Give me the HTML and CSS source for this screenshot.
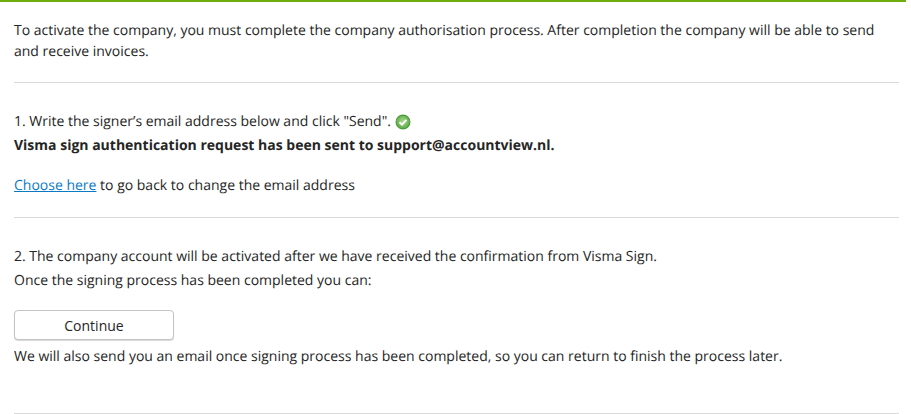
FILE: index.html
```html
<!DOCTYPE html>
<html>

<head>
    <link rel="stylesheet" href="styles.css">
</head>

<body>
    <div class="main">
        <div class="section intro">
            <p class="line">To activate the company, you must complete the company authorisation process. After completion the company will be able to send and receive invoices.</p>
        </div>

        <div class="section step1">
            <p class="line">1. Write the signer’s email address below and click "Send".
                <svg class="ok" width="16" height="16" viewBox="0 0 16 16">
                    <defs>
                        <radialGradient id="okfill" cx="50%" cy="45%" r="55%">
                            <stop offset="0%" stop-color="#a6d88f"/>
                            <stop offset="100%" stop-color="#5dab47"/>
                        </radialGradient>
                    </defs>
                    <circle cx="8" cy="8" r="6.9" fill="url(#okfill)" stroke="#4b9a3d" stroke-width="1.2"/>
                    <path d="M4.6 8.2 7 10.6 11.4 5.9" fill="none" stroke="#fff" stroke-width="2"/>
                </svg>
            </p>
            <p class="line"><b>Visma sign authentication request has been sent to support@accountview.nl.</b></p>
            <p class="line back"><a href="#">Choose here</a> to go back to change the email address</p>
        </div>

        <div class="section step2">
            <p class="line">2. The company account will be activated after we have received the confirmation from Visma Sign.</p>
            <p class="line">Once the signing process has been completed you can:</p>
            <button class="btn">Continue</button>
            <p class="line">We will also send you an email once signing process has been completed, so you can return to finish the process later.</p>
        </div>
    </div>
</body>

</html>
```

FILE: styles.css
```css
html, body {
    margin: 0;
    height: 100%;
    overflow: hidden;
    background-color: white;
}

body {
    font-family: "Open Sans", sans-serif;
    font-size: 14px;
    color: #252525;
    text-rendering: geometricPrecision;
}

.main {
    width: 906px;
    border-top: 2px solid #6eaf0d;
}

.section {
    width: 885px;
    margin-left: 14px;
    border-bottom: 1px solid #dadada;
}

.line {
    margin: 0;
    line-height: 24px;
}

.intro {
    padding: 18px 0 20px;
}

.intro .line {
    line-height: 21px;
}

.step1 {
    padding: 27px 0 19px;
}

.step1 .back {
    margin-top: 16px;
}

.step2 {
    padding: 27px 0 44px;
}

.ok {
    vertical-align: -4px;
}

a {
    color: #0a7ac4;
}

.btn {
    display: block;
    width: 160px;
    height: 30px;
    margin: 17px 0 5px;
    padding: 0;
    font-family: inherit;
    font-size: 14px;
    color: #252525;
    background-color: white;
    border: 1px solid #c4c4c4;
    border-radius: 4px;
    box-shadow: 0 1px 1px #d8d8d8;
}
```
